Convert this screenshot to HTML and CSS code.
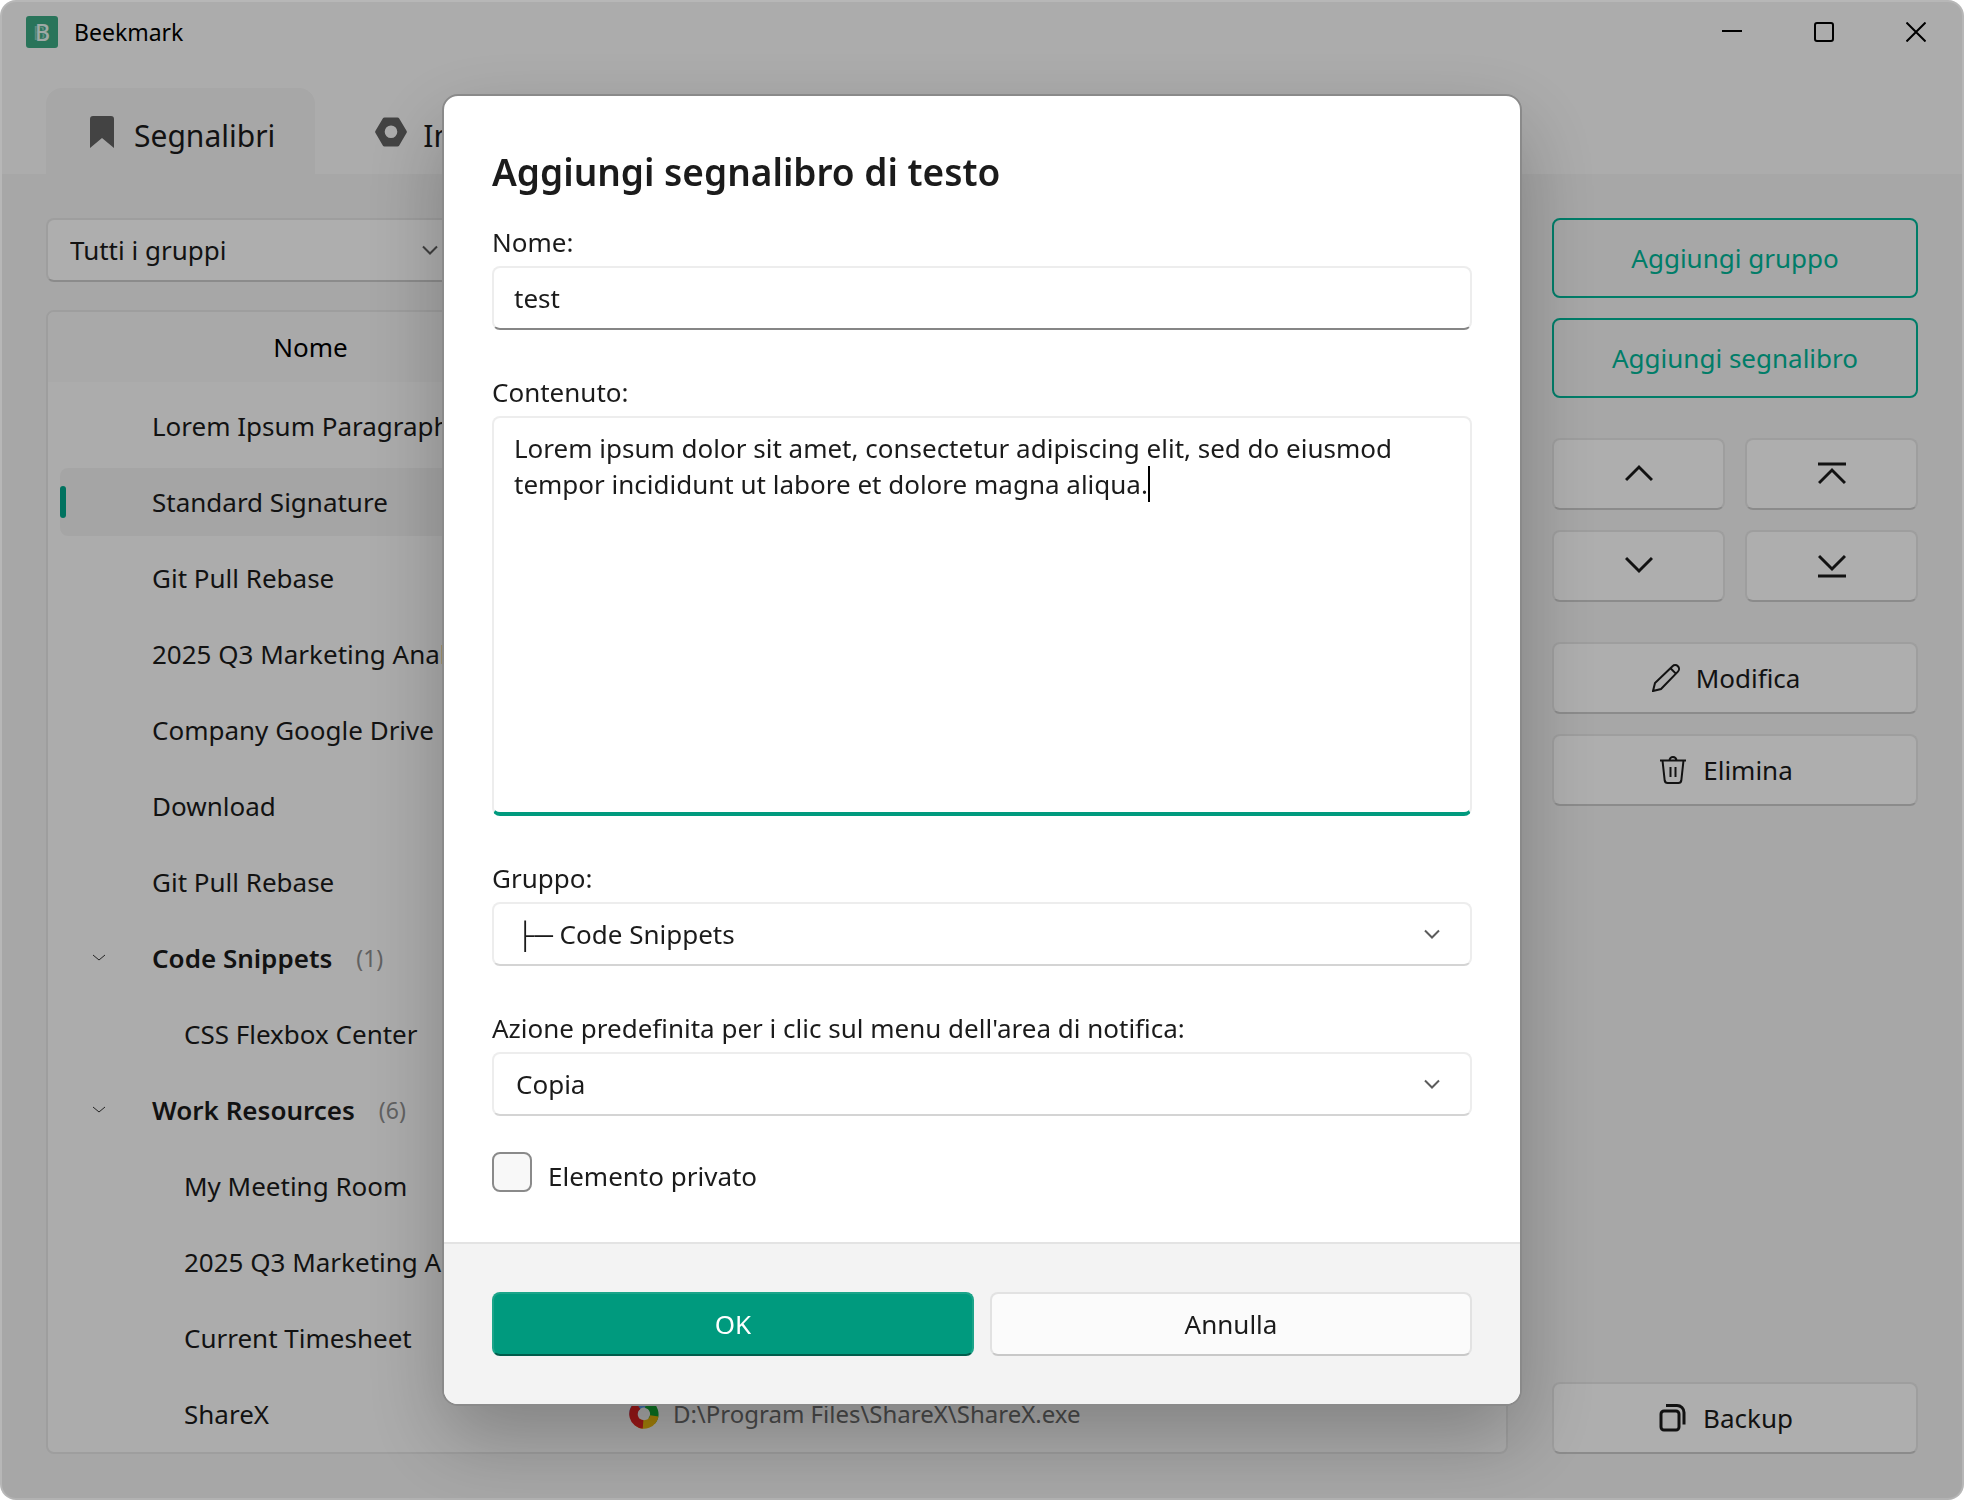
FILE: index.html
```
<!DOCTYPE html>
<html lang="it">
<head>
    <meta charset="UTF-8">
    <meta name="viewport" content="width=device-width, initial-scale=1.0">
    <title>Beekmark</title>
    <link rel="stylesheet" href="styles.css">
</head>
<body>

    <div class="window">
        <!-- Title bar -->
        <header class="titlebar">
            <svg class="logo" viewBox="0 0 32 32" aria-hidden="true">
                <rect width="32" height="32" rx="3" fill="#3ca782"/>
                <text x="7" y="24" font-size="19" fill="#8fcab5">B</text>
                <text x="9" y="25" font-size="23" font-weight="500" fill="#e4f3ee" stroke="#3ca782" stroke-width="1" paint-order="stroke">B</text>
            </svg>
            <span class="app-name">Beekmark</span>
            <div class="window-controls">
                <button class="window-button" aria-label="Riduci a icona">
                    <svg viewBox="0 0 20 20"><path d="M0 9h20"/></svg>
                </button>
                <button class="window-button" aria-label="Ingrandisci">
                    <svg viewBox="0 0 20 20"><rect x="1" y="1" width="18" height="18" rx="2"/></svg>
                </button>
                <button class="window-button" aria-label="Chiudi">
                    <svg viewBox="0 0 20 20"><path d="M0.500 0.500l19 19M19.500 0.500l-19 19"/></svg>
                </button>
            </div>
        </header>

        <!-- Tabs -->
        <nav class="tabs">
            <button class="tab active">
                <svg class="tab-icon" viewBox="0 0 32 32"><path d="M4 3a3 3 0 0 1 3-3h18a3 3 0 0 1 3 3v29L16 22 4 32z"/></svg>
                <span>Segnalibri</span>
            </button>
            <button class="tab">
                <svg class="tab-icon" viewBox="0 0 32 32"><path fill-rule="evenodd" d="M9.500 1.500h13a2 2 0 0 1 1.700 1l7.300 12.300a2 2 0 0 1 0 2.200l-7.300 12.500a2 2 0 0 1-1.700 1h-13a2 2 0 0 1-1.700-1L.500 17a2 2 0 0 1 0-2.200L7.800 2.500a2 2 0 0 1 1.700-1zM16 9.500a6.300 6.300 0 1 0 0 12.600 6.300 6.300 0 0 0 0-12.600z"/></svg>
                <span>Impostazioni</span>
            </button>
        </nav>

        <main class="content">
            <div class="bookmarks">
                <div class="select-wrap group-filter">
                    <select aria-label="Filtra per gruppo">
                        <option>Tutti i gruppi</option>
                    </select>
                    <svg class="chevron" viewBox="0 0 16 16"><path d="M1 4.500l7 7 7-7"/></svg>
                </div>

                <div class="table-panel">
                    <table>
                        <thead>
                            <tr>
                                <th>Nome</th>
                                <th>Contenuto</th>
                            </tr>
                        </thead>
                        <tbody>
                            <tr><td>Lorem Ipsum Paragraph</td><td></td></tr>
                            <tr class="selected"><td><div class="selection">Standard Signature</div></td><td></td></tr>
                            <tr><td>Git Pull Rebase</td><td></td></tr>
                            <tr><td>2025 Q3 Marketing Analysis</td><td></td></tr>
                            <tr><td>Company Google Drive</td><td></td></tr>
                            <tr><td>Download</td><td></td></tr>
                            <tr><td>Git Pull Rebase</td><td></td></tr>
                            <tr class="group">
                                <td><div class="group-name"><svg class="expander" viewBox="0 0 14 14"><path d="M1 4l6 5 6-5"/></svg><b>Code Snippets</b><span class="count">(1)</span></div></td>
                                <td></td>
                            </tr>
                            <tr class="child"><td>CSS Flexbox Center</td><td></td></tr>
                            <tr class="group">
                                <td><div class="group-name"><svg class="expander" viewBox="0 0 14 14"><path d="M1 4l6 5 6-5"/></svg><b>Work Resources</b><span class="count">(6)</span></div></td>
                                <td></td>
                            </tr>
                            <tr class="child"><td>My Meeting Room</td><td></td></tr>
                            <tr class="child"><td>2025 Q3 Marketing Analysis</td><td></td></tr>
                            <tr class="child"><td>Current Timesheet</td><td></td></tr>
                            <tr class="child">
                                <td>ShareX</td>
                                <td>
                                    <div class="target">
                                        <svg class="target-icon" viewBox="0 0 32 32" fill="none" stroke-width="9">
                                            <path d="M5 17A11 11 0 0 1 22 6.500" stroke="#5b9cf0"/>
                                            <path d="M18 5.200A11 11 0 0 1 24 23.500" stroke="#12a530"/>
                                            <path d="M27 18A11 11 0 0 1 9 24.500" stroke="#edb90c"/>
                                            <path d="M15 27A11 11 0 0 1 9.500 7" stroke="#e02222"/>
                                        </svg>
                                        <span>D:\Program Files\ShareX\ShareX.exe</span>
                                    </div>
                                </td>
                            </tr>
                        </tbody>
                    </table>
                </div>
            </div>

            <!-- Actions -->
            <aside class="actions">
                <button class="btn outline">Aggiungi gruppo</button>
                <button class="btn outline">Aggiungi segnalibro</button>
                <div class="move-buttons">
                    <button class="btn" aria-label="Sposta su"><svg class="move-icon" viewBox="0 0 28 28"><path d="M1 20l13-13 13 13"/></svg></button>
                    <button class="btn" aria-label="Sposta all'inizio"><svg class="move-icon" viewBox="0 0 28 28"><path d="M0 4h28M1 23l13-13 13 13"/></svg></button>
                    <button class="btn" aria-label="Sposta giù"><svg class="move-icon" viewBox="0 0 28 28"><path d="M1 6l13 13L27 6"/></svg></button>
                    <button class="btn" aria-label="Sposta alla fine"><svg class="move-icon" viewBox="0 0 28 28"><path d="M0 24h28M1 4l13 13L27 4"/></svg></button>
                </div>
                <button class="btn labelled">
                    <svg class="btn-icon" viewBox="0 0 28 28"><path d="M1 27l2-8L20.500 2.200a3.800 3.800 0 0 1 5.400 5.400L9 25zM18.500 4.200l5.400 5.400"/></svg>
                    Modifica
                </button>
                <button class="btn labelled">
                    <svg class="btn-icon" viewBox="0 0 28 28"><path d="M1 4.500h26M10.500 4.500a3.500 3.500 0 0 1 7 0M3.500 4.500l2.200 20a3 3 0 0 0 3 2.500h10.600a3 3 0 0 0 3-2.500l2.200-20M11.500 11v10M16.500 11v10"/></svg>
                    Elimina
                </button>
                <button class="btn labelled backup">
                    <svg class="btn-icon bold" viewBox="0 0 28 28"><rect x="2" y="7" width="18" height="19" rx="3"/><path d="M7 1.500h11a7 7 0 0 1 7 7v12"/></svg>
                    Backup
                </button>
            </aside>
        </main>
    </div>

    <!-- Add text bookmark dialog -->
    <div class="backdrop">
        <form class="dialog" role="dialog" aria-labelledby="dialog-title">
            <div class="dialog-body">
                <h1 id="dialog-title">Aggiungi segnalibro di testo</h1>

                <div class="field">
                    <label for="name">Nome:</label>
                    <input type="text" id="name" value="test">
                </div>

                <div class="field">
                    <label for="text">Contenuto:</label>
                    <div class="editor">
                        <textarea id="text" spellcheck="false">Lorem ipsum dolor sit amet, consectetur adipiscing elit, sed do eiusmod tempor incididunt ut labore et dolore magna aliqua.</textarea>
                        <span class="caret"></span>
                    </div>
                </div>

                <div class="field">
                    <label for="group">Gruppo:</label>
                    <div class="select-wrap">
                        <select id="group">
                            <option>├─ Code Snippets</option>
                            <option>├─ Work Resources</option>
                        </select>
                        <svg class="chevron" viewBox="0 0 16 16"><path d="M1 4.500l7 7 7-7"/></svg>
                    </div>
                </div>

                <div class="field">
                    <label for="action">Azione predefinita per i clic sul menu dell'area di notifica:</label>
                    <div class="select-wrap">
                        <select id="action">
                            <option>Copia</option>
                        </select>
                        <svg class="chevron" viewBox="0 0 16 16"><path d="M1 4.500l7 7 7-7"/></svg>
                    </div>
                </div>

                <div class="check">
                    <input type="checkbox" id="private">
                    <label for="private">Elemento privato</label>
                </div>
            </div>

            <div class="dialog-footer">
                <button type="submit" class="btn primary">OK</button>
                <button type="button" class="btn">Annulla</button>
            </div>
        </form>
    </div>

</body>
</html>
```
FILE: styles.css
```
* {
    box-sizing: border-box;
}
body {
    margin: 0;
    font-family: "Noto Sans", "Open Sans", sans-serif;
    font-size: 26px;
    line-height: 36px;
    color: #1b1b1b;
    background: #fff;
}
button, input, select, textarea {
    font: inherit;
    color: inherit;
}
svg {
    flex: none;
}

/* Window */
.window {
    display: flex;
    flex-direction: column;
    min-height: 100vh;
    padding: 0 2px;
    background: #f7f7f7;
    border-radius: 16px;
}
.titlebar {
    display: flex;
    align-items: center;
    height: 64px;
    padding-left: 24px;
}
.logo {
    width: 32px;
    height: 32px;
}
.app-name {
    margin-left: 16px;
    font-size: 23px;
    color: #000;
}
.window-controls {
    display: flex;
    margin-left: auto;
}
.window-button {
    display: flex;
    align-items: center;
    justify-content: center;
    width: 92px;
    height: 64px;
    padding: 0;
    border: 0;
    background: none;
}
.window-button svg {
    width: 20px;
    height: 20px;
    fill: none;
    stroke: #000;
    stroke-width: 2;
}

/* Tabs */
.tabs {
    display: flex;
    gap: 20px;
    padding: 24px 44px 0;
}
.tab {
    display: flex;
    align-items: center;
    gap: 16px;
    height: 86px;
    padding: 2px 40px 0;
    border: 0;
    border-radius: 16px 16px 0 0;
    background: none;
    font-size: 30px;
}
.tab span {
    padding-top: 8px;
}
.tab.active {
    background: #efefef;
}
.tab-icon {
    width: 32px;
    height: 32px;
    fill: #606060;
}

/* Content */
.content {
    display: flex;
    flex: 1;
    gap: 44px;
    padding: 44px 44px 46px;
    background: #efefef;
    border-radius: 0 0 16px 16px;
}
.bookmarks {
    display: flex;
    flex-direction: column;
    flex: 1;
    gap: 28px;
}
.group-filter {
    width: 416px;
}
.table-panel {
    flex: 1;
    border: 2px solid #e2e2e2;
    border-radius: 8px;
    background: #f7f7f7;
    overflow: hidden;
}
table {
    width: 100%;
    border-collapse: collapse;
    table-layout: fixed;
}
th {
    height: 70px;
    padding: 0;
    background: #f2f2f2;
    color: #000;
    font-weight: normal;
}
th:first-child {
    width: 36%;
}
tbody::before {
    content: "";
    display: block;
    height: 6px;
}
td {
    height: 76px;
    padding: 0 0 0 56px;
    white-space: nowrap;
    overflow: hidden;
}
td:first-child {
    padding-left: 104px;
}
.child td:first-child {
    padding-left: 136px;
}
.group td:first-child {
    padding-left: 44px;
}
.selected td:first-child {
    padding-left: 12px;
}
.selection {
    display: flex;
    align-items: center;
    gap: 86px;
    height: 68px;
    border-radius: 8px 0 0 8px;
    background: #ededed;
}
.selection::before {
    content: "";
    width: 6px;
    height: 32px;
    border-radius: 3px;
    background: #00a489;
}
.group-name {
    display: flex;
    align-items: center;
}
.group-name b {
    margin-left: 46px;
    font-weight: 600;
}
.expander {
    width: 14px;
    height: 14px;
    fill: none;
    stroke: #333;
    stroke-width: 1;
}
.count {
    margin-left: 24px;
    font-size: 23px;
    color: #8c8c8c;
}
.target {
    display: flex;
    align-items: center;
    gap: 14px;
    color: #6a6a6a;
    font-size: 24px;
}
.target-icon {
    width: 30px;
    height: 30px;
}

/* Actions */
.actions {
    display: flex;
    flex-direction: column;
    gap: 20px;
    width: 366px;
}
.btn {
    display: flex;
    align-items: center;
    justify-content: center;
    gap: 16px;
    height: 72px;
    border: 2px solid #e2e2e2;
    border-bottom-color: #c8c8c8;
    border-radius: 8px;
    background: #fafafa;
}
.btn.outline {
    height: 80px;
    border-color: #00b396;
    background: none;
    color: #00b396;
}
.btn.labelled {
    padding-right: 24px;
}
.move-buttons {
    display: grid;
    grid-template-columns: 1fr 1fr;
    gap: 20px;
    margin: 20px 0;
}
.move-icon, .btn-icon {
    width: 28px;
    height: 28px;
    fill: none;
    stroke: #1b1b1b;
    stroke-width: 2;
}
.move-icon, .btn-icon.bold {
    stroke-width: 3;
}
.backup {
    margin-top: auto;
}

/* Fields */
.select-wrap {
    display: grid;
    align-items: center;
}
.select-wrap > * {
    grid-area: 1 / 1;
}
select, input[type="text"], textarea {
    width: 100%;
    height: 64px;
    padding: 0 20px;
    border: 2px solid #ededed;
    border-radius: 8px;
    background: #fff;
    outline: none;
}
select {
    appearance: none;
    padding: 0 22px;
    border-bottom-color: #d4d4d4;
}
.group-filter select {
    background: #fafafa;
    border-color: #e2e2e2;
    border-bottom-color: #c8c8c8;
}
.chevron {
    justify-self: end;
    width: 16px;
    height: 16px;
    margin-right: 32px;
    fill: none;
    stroke: #5c5c5c;
    stroke-width: 2;
    pointer-events: none;
}
.group-filter .chevron {
    margin-right: 24px;
}
input[type="text"] {
    border-bottom-color: #868686;
}
.editor {
    position: relative;
    display: flex;
}
textarea {
    height: 400px;
    padding: 12px 20px;
    border-bottom: 4px solid #009a7e;
    resize: none;
}
.caret {
    position: absolute;
    left: 656px;
    top: 50px;
    width: 2px;
    height: 36px;
    background: #000;
}

/* Dialog */
.backdrop {
    position: fixed;
    inset: 0;
    display: grid;
    place-items: center;
    border: 2px solid rgba(255, 255, 255, 0.12);
    border-radius: 16px;
    background: rgba(0, 0, 0, 0.3);
}
.dialog {
    width: 100%;
    max-width: 1080px;
    border: 2px solid #8a8a8a;
    border-radius: 16px;
    background: #fff;
    box-shadow: 0 32px 80px rgba(0, 0, 0, 0.25);
    overflow: hidden;
}
.dialog-body {
    display: flex;
    flex-direction: column;
    gap: 40px;
    padding: 48px;
}
h1 {
    margin: 0 0 -20px;
    font-size: 37px;
    line-height: 56px;
    font-weight: 600;
}
.field {
    display: flex;
    flex-direction: column;
    gap: 2px;
}
.field label {
    line-height: 44px;
}
.check {
    display: flex;
    align-items: center;
    gap: 16px;
    margin-top: -6px;
}
.check input {
    appearance: none;
    width: 40px;
    height: 40px;
    margin: 0;
    border: 2px solid #8a8a8a;
    border-radius: 8px;
    background: #f8f8f8;
}
.check label {
    padding-top: 8px;
}
.dialog-footer {
    display: grid;
    grid-template-columns: 1fr 1fr;
    gap: 16px;
    padding: 48px;
    border-top: 2px solid #e3e3e3;
    background: #f3f3f3;
}
.dialog-footer .btn {
    height: 64px;
    background: #fbfbfb;
}
.dialog-footer .primary {
    border-color: #1ba489;
    border-bottom-color: #005c4b;
    background: #009a7e;
    color: #fff;
}
```
